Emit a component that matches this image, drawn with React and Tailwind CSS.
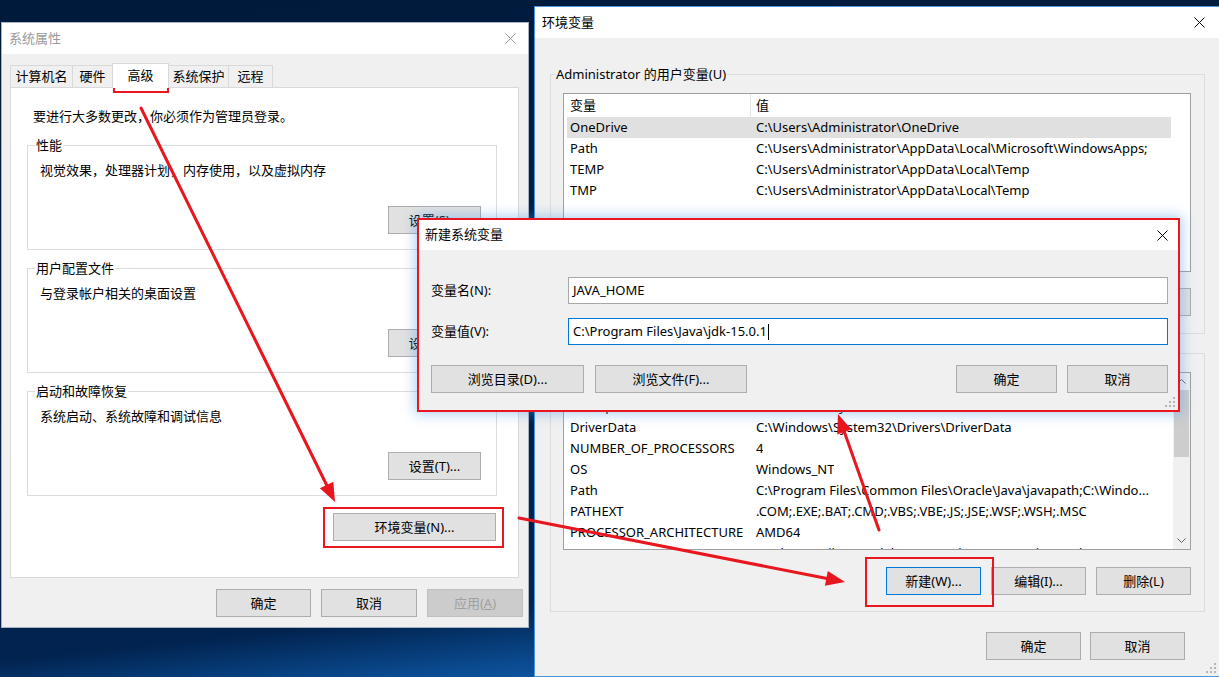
import React from "react";

function CloseX({ color = "#000000" }) {
  return (
    <svg width="11" height="11" viewBox="0 0 11 11" className="shrink-0">
      <path d="M0.5 0.5L10.5 10.5M10.5 0.5L0.5 10.5" stroke={color} strokeWidth="1" fill="none" />
    </svg>
  );
}

function Grip() {
  const pts = [[8, 0], [8, 4], [4, 4], [8, 8], [4, 8], [0, 8]];
  return (
    <svg width="11" height="11" viewBox="0 0 11 11" className="absolute bottom-[2px] right-[2px]">
      {pts.map(([x, y], i) => (
        <rect key={i} x={x} y={y} width="2" height="2" fill="#b5b5b5" />
      ))}
    </svg>
  );
}

function Btn({ children, className = "", variant = "normal" }) {
  const look =
    variant === "focus"
      ? "border-[#0078d7] bg-[#e1e1e1]"
      : variant === "disabled"
      ? "border-[#bfbfbf] bg-[#cccccc] text-[#a0a0a0]"
      : "border-[#adadad] bg-[#e1e1e1]";
  return (
    <div className={"flex h-[28px] shrink-0 items-center justify-center border leading-[17px] " + look + " " + className}>
      {children}
    </div>
  );
}

function PanelGroup({ label, text, btn }) {
  return (
    <fieldset className="w-[470px] border border-[#dcdcdc]">
      <legend className="ml-[7px] px-[1px] leading-[17px]">{label}</legend>
      <div className="flex h-[95px] flex-col pb-[15px] pl-[12px] pr-[15px] pt-[8px]">
        <div className="leading-[17px]">{text}</div>
        <Btn className="mt-auto w-[93px] self-end">{btn}</Btn>
      </div>
    </fieldset>
  );
}

function ListHeader() {
  return (
    <div className="flex h-[23px] w-[607px] shrink-0 items-center leading-[17px]">
      <div className="flex h-full w-[187px] items-center border-r border-[#e5e5e5] pl-[6px]">变量</div>
      <div className="pl-[5px]">值</div>
    </div>
  );
}

function VarRow({ name, value, selected }) {
  return (
    <div
      className={
        "flex h-[21px] shrink-0 items-center whitespace-nowrap leading-[17px] " +
        (selected ? "bg-[#e0e0e0]" : "")
      }
    >
      <div className="w-[184px] shrink-0 overflow-hidden pl-[3px]">{name}</div>
      <div className="overflow-hidden pl-[5px]">{value}</div>
    </div>
  );
}

function Chevron({ up }) {
  return (
    <svg width="9" height="5" viewBox="0 0 9 5">
      <path d={up ? "M0.5 4.5L4.5 0.5L8.5 4.5" : "M0.5 0.5L4.5 4.5L8.5 0.5"} stroke="#606060" strokeWidth="1" fill="none" />
    </svg>
  );
}

const userVars = [
  ["OneDrive", "C:\\Users\\Administrator\\OneDrive", true],
  ["Path", "C:\\Users\\Administrator\\AppData\\Local\\Microsoft\\WindowsApps;"],
  ["TEMP", "C:\\Users\\Administrator\\AppData\\Local\\Temp"],
  ["TMP", "C:\\Users\\Administrator\\AppData\\Local\\Temp"],
];

const sysVars = [
  ["ComSpec", "C:\\Windows\\system32\\cmd.exe"],
  ["DriverData", "C:\\Windows\\System32\\Drivers\\DriverData"],
  ["NUMBER_OF_PROCESSORS", "4"],
  ["OS", "Windows_NT"],
  ["Path", "C:\\Program Files\\Common Files\\Oracle\\Java\\javapath;C:\\Windo..."],
  ["PATHEXT", ".COM;.EXE;.BAT;.CMD;.VBS;.VBE;.JS;.JSE;.WSF;.WSH;.MSC"],
  ["PROCESSOR_ARCHITECTURE", "AMD64"],
  ["PROCESSOR_IDENTIFIER", "Intel64 Family 6 Model 142 Stepping 12, GenuineIntel"],
];

function Arrow({ x1, y1, x2, y2 }) {
  const dx = x2 - x1;
  const dy = y2 - y1;
  const len = Math.hypot(dx, dy);
  const ux = dx / len;
  const uy = dy / len;
  const hl = 19;
  const hw = 7.5;
  const bx = x2 - ux * hl;
  const by = y2 - uy * hl;
  const px = -uy * hw;
  const py = ux * hw;
  return (
    <g>
      <line x1={x1} y1={y1} x2={bx + ux * 2} y2={by + uy * 2} stroke="#e8161e" strokeWidth="3" strokeLinecap="round" />
      <polygon points={`${x2},${y2} ${bx + px},${by + py} ${bx - px},${by - py}`} fill="#e8161e" />
    </g>
  );
}

export default function App() {
  return (
    <div className="relative h-[677px] w-[1219px] overflow-hidden bg-[linear-gradient(174deg,#001a3b_0%,#01234f_82%,#0a4a8f_89%,#1462b3_94%,#0d56a3_97%,#0a4b92_100%)] font-['Noto_Sans','Noto_Sans_CJK_SC',sans-serif] text-[13px] text-black">
      {/* 系统属性 window */}
      <div className="absolute left-[1px] top-[22px] flex h-[606px] w-[528px] flex-col border border-[#aab4c0] bg-[#f0f0f0]">
        <div className="flex h-[31px] shrink-0 items-center justify-between bg-white pl-[7px] pr-[12px] text-[#9a9a9a]">
          <span>系统属性</span>
          <CloseX color="#9a9a9a" />
        </div>
        <div className="flex flex-1 flex-col pt-[11px]">
          <div className="relative z-10 ml-[8px] flex h-[22px] items-end leading-[17px]">
            <div className="flex h-[22px] w-[63px] items-center justify-center border border-b-0 border-[#d9d9d9] bg-[#f0f0f0]">计算机名</div>
            <div className="-ml-px flex h-[22px] w-[41px] items-center justify-center border border-b-0 border-[#d9d9d9] bg-[#f0f0f0]">硬件</div>
            <div className="-mb-px -ml-px flex h-[25px] w-[57px] items-center justify-center border border-b-0 border-[#d9d9d9] bg-white pb-[2px]">高级</div>
            <div className="-ml-px flex h-[22px] w-[61px] items-center justify-center border border-b-0 border-[#d9d9d9] bg-[#f0f0f0]">系统保护</div>
            <div className="-ml-px flex h-[22px] w-[45px] items-center justify-center border border-b-0 border-[#d9d9d9] bg-[#f0f0f0]">远程</div>
          </div>
          <div className="ml-[8px] flex h-[491px] w-[509px] flex-col border border-[#d9d9d9] bg-white pl-[16px] pr-[21px] pt-[20px]">
            <div className="ml-[6px] leading-[17px]">要进行大多数更改，你必须作为管理员登录。</div>
            <div className="mt-[12px]">
              <PanelGroup label="性能" text="视觉效果，处理器计划，内存使用，以及虚拟内存" btn="设置(S)..." />
            </div>
            <div className="mt-[10px]">
              <PanelGroup label="用户配置文件" text="与登录帐户相关的桌面设置" btn="设置(E)..." />
            </div>
            <div className="mt-[10px]">
              <PanelGroup label="启动和故障恢复" text="系统启动、系统故障和调试信息" btn="设置(T)..." />
            </div>
            <Btn className="mr-[1px] mt-[17px] w-[163px] self-end">环境变量(N)...</Btn>
          </div>
          <div className="mt-[11px] flex justify-end gap-[10px] pr-[5px]">
            <Btn className="w-[95px]">确定</Btn>
            <Btn className="w-[96px]">取消</Btn>
            <Btn className="w-[96px]" variant="disabled">
              <span>
                应用(<span className="underline">A</span>)
              </span>
            </Btn>
          </div>
        </div>
      </div>

      {/* 环境变量 window */}
      <div className="absolute left-[534px] top-[6px] flex h-[671px] w-[686px] flex-col border border-[#4a94dc] bg-[#f0f0f0]">
        <div className="flex h-[31px] shrink-0 items-center justify-between bg-white pl-[7px] pr-[14px]">
          <span>环境变量</span>
          <CloseX />
        </div>
        <div className="flex flex-col pl-[15px] pt-[28px]">
          <fieldset className="w-[655px] border border-[#dcdcdc]">
            <legend className="ml-[4px] px-[1px] leading-[17px]">Administrator 的用户变量(U)</legend>
            <div className="flex flex-col pb-[17px] pl-[12px] pr-[13px] pt-[10px]">
              <div className="flex h-[179px] w-[628px] flex-col overflow-hidden border border-[#a0a0a0] bg-white">
                <ListHeader />
                <div className="ml-[3px] flex w-[604px] flex-col">
                  {userVars.map(([n, v, s]) => (
                    <VarRow key={n} name={n} value={v} selected={s} />
                  ))}
                </div>
              </div>
              <div className="mt-[16px] flex justify-end gap-[10px]">
                <Btn className="w-[95px]">新建(N)...</Btn>
                <Btn className="w-[95px]">编辑(E)...</Btn>
                <Btn className="w-[95px]">删除(D)</Btn>
              </div>
            </div>
          </fieldset>
          <fieldset className="mt-[11px] w-[655px] border border-[#dcdcdc]">
            <legend className="ml-[4px] px-[1px] leading-[17px]">系统变量(S)</legend>
            <div className="flex flex-col pb-[16px] pl-[12px] pr-[13px] pt-[10px]">
              <div className="flex h-[178px] w-[628px] overflow-hidden border border-[#a0a0a0] bg-white">
                <div className="flex flex-1 flex-col overflow-hidden">
                  <ListHeader />
                  <div className="ml-[3px] flex flex-col">
                    {sysVars.map(([n, v]) => (
                      <VarRow key={n} name={n} value={v} />
                    ))}
                  </div>
                </div>
                <div className="flex w-[17px] shrink-0 flex-col bg-[#f0f0f0]">
                  <div className="flex h-[17px] items-center justify-center">
                    <Chevron up />
                  </div>
                  <div className="mx-[1px] h-[67px] bg-[#cdcdcd]" />
                  <div className="flex-1" />
                  <div className="flex h-[17px] items-center justify-center">
                    <Chevron />
                  </div>
                </div>
              </div>
              <div className="mt-[17px] flex justify-end gap-[10px]">
                <Btn className="w-[95px]" variant="focus">新建(W)...</Btn>
                <Btn className="w-[95px]">编辑(I)...</Btn>
                <Btn className="w-[95px]">删除(L)</Btn>
              </div>
            </div>
          </fieldset>
          <div className="mt-[20px] flex justify-end gap-[9px] pr-[34px]">
            <Btn className="w-[95px]">确定</Btn>
            <Btn className="w-[95px]">取消</Btn>
          </div>
        </div>
        <Grip />
      </div>

      {/* 新建系统变量 dialog */}
      <div className="absolute left-[418px] top-[219px] flex h-[192px] w-[761px] flex-col border border-[#5a9be0] bg-[#f0f0f0] shadow-[0_0_12px_3px_rgba(70,150,235,0.45)]">
        <div className="flex h-[30px] shrink-0 items-center justify-between bg-white pl-[6px] pr-[10px]">
          <span>新建系统变量</span>
          <CloseX />
        </div>
        <div className="flex flex-col pl-[12px] pr-[10px] pt-[27px] leading-[17px]">
          <div className="flex items-center">
            <span className="w-[137px] shrink-0">变量名(N):</span>
            <div className="flex h-[27px] w-[600px] items-center border border-[#a8a8a8] bg-white pl-[4px]">JAVA_HOME</div>
          </div>
          <div className="mt-[14px] flex items-center">
            <span className="w-[137px] shrink-0">变量值(V):</span>
            <div className="flex h-[27px] w-[600px] items-center border border-[#0078d7] bg-white pl-[4px]">
              <span>C:\Program Files\Java\jdk-15.0.1</span>
              <span className="ml-[1px] h-[16px] w-[1px] bg-black" />
            </div>
          </div>
          <div className="mt-[20px] flex">
            <Btn className="w-[153px]">浏览目录(D)...</Btn>
            <Btn className="ml-[11px] w-[152px]">浏览文件(F)...</Btn>
            <Btn className="ml-auto w-[101px]">确定</Btn>
            <Btn className="ml-[10px] w-[101px]">取消</Btn>
          </div>
        </div>
        <Grip />
      </div>

      {/* red annotation boxes */}
      <div className="pointer-events-none absolute left-[113px] top-[63px] h-[30px] w-[56px] border-2 border-[#e8161e]" />
      <div className="pointer-events-none absolute left-[323px] top-[507px] h-[41px] w-[181px] border-2 border-[#e8161e]" />
      <div className="pointer-events-none absolute left-[417px] top-[218px] h-[194px] w-[763px] border-2 border-[#e8161e]" />
      <div className="pointer-events-none absolute left-[865px] top-[557px] h-[50px] w-[129px] border-2 border-[#e8161e]" />

      {/* arrows */}
      <svg className="pointer-events-none absolute left-0 top-0" width="1219" height="677" viewBox="0 0 1219 677">
        <Arrow x1={141} y1={108} x2={335} y2={502} />
        <Arrow x1={519} y1={518} x2={845} y2={582} />
        <Arrow x1={879} y1={530} x2={838} y2={414} />
      </svg>
    </div>
  );
}
